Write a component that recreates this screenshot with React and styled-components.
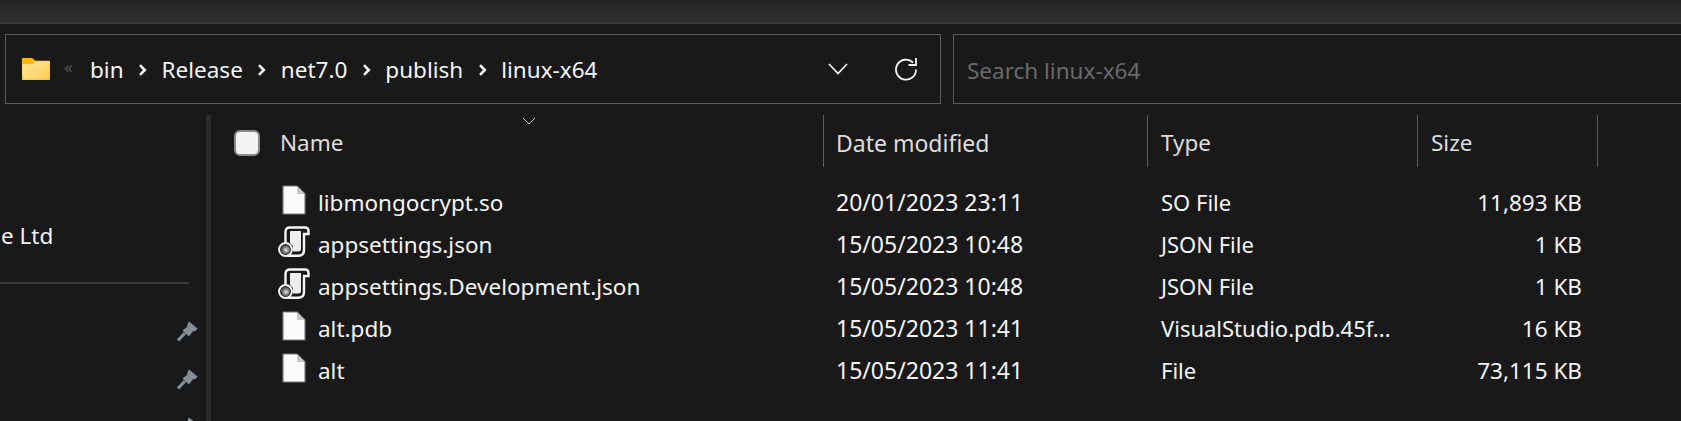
import React from 'react'
import styled, { createGlobalStyle } from 'styled-components'

const GlobalStyle = createGlobalStyle`
html, body {
  margin: 0;
  padding: 0;
  background: #191919;
  overflow: hidden;
}
* { box-sizing: border-box; }
`;

const Page = styled.div`
width: 1681px;
height: 421px;
overflow: hidden;
background: #191919;
color: #f4f4f4;
font-family: "Noto Sans", "Open Sans", sans-serif;
font-size: 22.5px;
display: flex;
flex-direction: column;
`;

const TitleBar = styled.div`
height: 24px;
flex-shrink: 0;
background: linear-gradient(#262626, #2e2e2e);
border-bottom: 2px solid #3a3a3a;
`;

const AddressRow = styled.div`
display: flex;
gap: 12px;
height: 70px;
margin: 10px 0 11px 5px;
flex-shrink: 0;
`;

const AddressBox = styled.div`
width: 936px;
display: flex;
align-items: center;
border: 1px solid #5b5b5b;
padding-left: 16px;
position: relative;
`;

const Crumbs = styled.div`
display: flex;
align-items: center;
flex: 1;
margin-top: 1px;
`;

const Back = styled.span`
color: #5c5c5c;
font-size: 17px;
width: 26px;
margin: -6px 0 0 14px;
`;

const Crumb = styled.span`
white-space: nowrap;
`;

const Separator = styled.svg`
width: 9px;
height: 12px;
margin: 0 14.5px;
flex-shrink: 0;
`;

const AddressIcon = styled.svg`
flex-shrink: 0;
`;

const AddressTools = styled.div`
display: flex;
align-items: center;
gap: 46px;
margin-right: 22px;
`;

const SearchBox = styled.div`
flex: 1;
display: flex;
align-items: center;
border: 1px solid #5b5b5b;
border-right: none;
padding: 2px 0 0 13px;
color: #6a6a6a;
`;

const Content = styled.div`
flex: 1;
display: flex;
min-height: 0;
`;

const Sidebar = styled.div`
width: 206px;
flex-shrink: 0;
padding-top: 100px;
`;

const SidebarItem = styled.div`
height: 42px;
line-height: 42px;
padding-left: 1px;
white-space: nowrap;
`;

const SidebarDivider = styled.div`
width: 189px;
height: 2px;
background: #3a3a3a;
margin: 25px 0 37px;
`;

const PinRow = styled.div`
height: 48px;
display: flex;
justify-content: flex-end;
padding-right: 8px;
`;

const Splitter = styled.div`
width: 5px;
flex-shrink: 0;
background: #2b2b2b;
`;

const List = styled.div`
flex: 1;
display: flex;
flex-direction: column;
`;

const Columns = styled.div`
display: grid;
grid-template-columns: 613px 324px 270px 180px;
`;

const Header = styled(Columns)`
height: 52px;
margin-bottom: 15px;
color: #dddddd;
`;

const HeaderCell = styled.div`
display: flex;
align-items: center;
padding: 3px 0 0 ${props => props.$pad}px;
font-size: ${props => props.$size || 22.5}px;
border-right: 1px solid #5b5b5b;
position: relative;
white-space: nowrap;
`;

const SelectAll = styled.div`
width: 26px;
height: 26px;
background: #f3f3f3;
border: 2px solid #8a8a8a;
border-radius: 6px;
margin-right: 20px;
`;

const SortArrow = styled.svg`
position: absolute;
top: 2px;
left: 311px;
`;

const Row = styled(Columns)`
height: 42px;
padding-bottom: 2px;
align-items: center;
`;

const NameCell = styled.div`
display: flex;
align-items: center;
gap: 8px;
padding-left: 67px;
white-space: nowrap;
`;

const FileCell = styled.div`
padding-left: ${props => props.$pad}px;
font-size: ${props => props.$size || 22.5}px;
white-space: nowrap;
`;

const SizeCell = styled.div`
padding-right: 16px;
text-align: right;
`;

const IconSlot = styled.div`
width: 32px;
height: 32px;
margin-bottom: 5px;
display: flex;
align-items: center;
justify-content: center;
`;

const Chevron = () => (
  <Separator viewBox="0 0 9 12">
    <path d="M2 1.2 L6.8 6 L2 10.8" fill="none" stroke="#f4f4f4" strokeWidth="2.6" />
  </Separator>
);

const FolderIcon = () => (
  <AddressIcon width="28" height="22" viewBox="0 0 28 22">
    <defs>
      <linearGradient id="folderFill" x1="0" y1="0" x2="1" y2="1">
        <stop offset="0" stopColor="#ffe9a6" />
        <stop offset="1" stopColor="#fdcb45" />
      </linearGradient>
    </defs>
    <path d="M1 0 H9 Q10.5 0 11.5 1 L14 3 V7 H0 V1 Q0 0 1 0 Z" fill="#f7b70f" />
    <path d="M0 6 H9 Q10.5 6 12 4.5 L13.5 3 H27 Q28 3 28 4 V21 Q28 22 27 22 H1 Q0 22 0 21 Z" fill="url(#folderFill)" stroke="#f7bd22" strokeWidth="0.6" />
  </AddressIcon>
);

const DropIcon = () => (
  <AddressIcon width="20" height="12" viewBox="0 0 20 12">
    <path d="M1 1 L10 10.5 L19 1" fill="none" stroke="#f4f4f4" strokeWidth="1.7" />
  </AddressIcon>
);

const RefreshIcon = () => (
  <AddressIcon width="24" height="24" viewBox="0 0 24 24">
    <path d="M19 5.5 A10 10 0 1 0 22 12.5" fill="none" stroke="#f4f4f4" strokeWidth="1.8" />
    <path d="M14.5 8 H22 V1" fill="none" stroke="#f4f4f4" strokeWidth="1.8" />
  </AddressIcon>
);

const PinIcon = () => (
  <svg width="21" height="21" viewBox="0 0 21 21">
    <path d="M12 0.5 L20.5 7.5 L18.5 10 L15.5 10.5 L12 15.5 L5.5 9.5 L10 6 L11 2 Z" fill="#868e96" />
    <path d="M8 12 L1 19.5" stroke="#868e96" strokeWidth="3" />
  </svg>
);

const PlainFileIcon = () => (
  <svg width="24" height="30" viewBox="0 0 24 30">
    <path d="M1 1 H15 L23 9 V29 H1 Z" fill="#fbfbfb" stroke="#7a7a7a" strokeWidth="1.2" />
    <path d="M15 1 V9 H23 Z" fill="#c8c8c8" />
  </svg>
);

const ScriptFileIcon = () => (
  <svg width="32" height="31" viewBox="0 0 32 31">
    <defs>
      <radialGradient id="gear" cx="0.55" cy="0.55" r="0.6">
        <stop offset="0" stopColor="#e8e8e8" />
        <stop offset="0.5" stopColor="#808080" />
        <stop offset="1" stopColor="#2c2c2c" />
      </radialGradient>
    </defs>
    <path d="M7.5 20 V6 Q7.5 1.5 12 1.5 H27 Q30.5 1.5 30.5 5 V8 H26 V24 Q26 29.8 20 29.8 H9" fill="#191919" stroke="#f6f6f6" strokeWidth="2.4" />
    <path d="M12 17 V6 Q12 5 13 5 H23 V23 Q23 25.5 20 25.5 H15 V20 Z" fill="#eeeeee" />
    <circle cx="7.5" cy="23.5" r="6.4" fill="#191919" stroke="#f6f6f6" strokeWidth="2" />
    <circle cx="7.5" cy="23.5" r="4.8" fill="url(#gear)" />
  </svg>
);

const crumbs = ['bin', 'Release', 'net7.0', 'publish', 'linux-x64'];

const files = [
  { name: 'libmongocrypt.so', date: '20/01/2023 23:11', type: 'SO File', size: '11,893 KB', Icon: PlainFileIcon },
  { name: 'appsettings.json', date: '15/05/2023 10:48', type: 'JSON File', size: '1 KB', Icon: ScriptFileIcon },
  { name: 'appsettings.Development.json', date: '15/05/2023 10:48', type: 'JSON File', size: '1 KB', Icon: ScriptFileIcon },
  { name: 'alt.pdb', date: '15/05/2023 11:41', type: 'VisualStudio.pdb.45f...', size: '16 KB', Icon: PlainFileIcon },
  { name: 'alt', date: '15/05/2023 11:41', type: 'File', size: '73,115 KB', Icon: PlainFileIcon },
];

const App = () => {
  return (
    <Page>
      <GlobalStyle />
      <TitleBar />
      <AddressRow>
        <AddressBox>
          <FolderIcon />
          <Back>«</Back>
          <Crumbs>
            {crumbs.map((crumb, i) => (
              <React.Fragment key={crumb}>
                {i > 0 && <Chevron />}
                <Crumb>{crumb}</Crumb>
              </React.Fragment>
            ))}
          </Crumbs>
          <AddressTools>
            <DropIcon />
            <RefreshIcon />
          </AddressTools>
        </AddressBox>
        <SearchBox>Search linux-x64</SearchBox>
      </AddressRow>
      <Content>
        <Sidebar>
          <SidebarItem>e Ltd</SidebarItem>
          <SidebarDivider />
          <PinRow><PinIcon /></PinRow>
          <PinRow><PinIcon /></PinRow>
          <PinRow><PinIcon /></PinRow>
        </Sidebar>
        <Splitter />
        <List>
          <Header>
            <HeaderCell $pad={23}>
              <SelectAll />
              Name
              <SortArrow width="14" height="8" viewBox="0 0 14 8">
                <path d="M1 1 L7 7 L13 1" fill="none" stroke="#cfcfcf" strokeWidth="1" />
              </SortArrow>
            </HeaderCell>
            <HeaderCell $pad={12} $size={23}>Date modified</HeaderCell>
            <HeaderCell $pad={13}>Type</HeaderCell>
            <HeaderCell $pad={13}>Size</HeaderCell>
          </Header>
          {files.map(file => (
            <Row key={file.name}>
              <NameCell>
                <IconSlot><file.Icon /></IconSlot>
                {file.name}
              </NameCell>
              <FileCell $pad={12} $size={23}>{file.date}</FileCell>
              <FileCell $pad={13} $size={22}>{file.type}</FileCell>
              <SizeCell>{file.size}</SizeCell>
            </Row>
          ))}
        </List>
      </Content>
    </Page>
  )
}

export default App
